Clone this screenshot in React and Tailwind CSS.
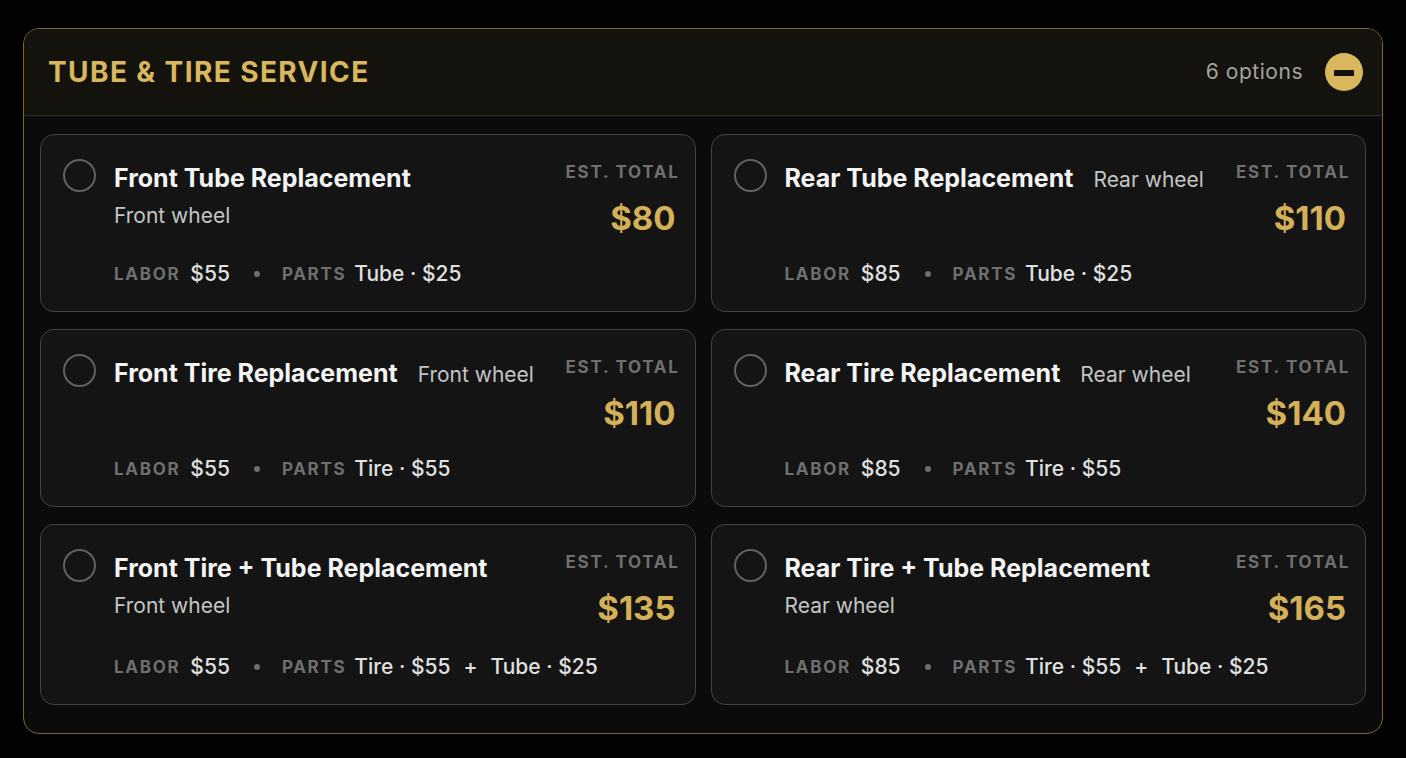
import React, { useState } from 'react';
import clsx from 'clsx';

const services = [
  { id: 'front-tube', name: 'Front Tube Replacement', wheel: 'Front wheel', labor: 55, parts: [{ name: 'Tube', price: 25 }] },
  { id: 'rear-tube', name: 'Rear Tube Replacement', wheel: 'Rear wheel', labor: 85, parts: [{ name: 'Tube', price: 25 }] },
  { id: 'front-tire', name: 'Front Tire Replacement', wheel: 'Front wheel', labor: 55, parts: [{ name: 'Tire', price: 55 }] },
  { id: 'rear-tire', name: 'Rear Tire Replacement', wheel: 'Rear wheel', labor: 85, parts: [{ name: 'Tire', price: 55 }] },
  {
    id: 'front-both',
    name: 'Front Tire + Tube Replacement',
    wheel: 'Front wheel',
    labor: 55,
    parts: [{ name: 'Tire', price: 55 }, { name: 'Tube', price: 25 }]
  },
  {
    id: 'rear-both',
    name: 'Rear Tire + Tube Replacement',
    wheel: 'Rear wheel',
    labor: 85,
    parts: [{ name: 'Tire', price: 55 }, { name: 'Tube', price: 25 }]
  }
];

const getTotal = (service) =>
  service.parts.reduce((sum, part) => sum + part.price, service.labor);

const ServiceCard = ({ service, checked, onSelect }) => {
  const { id, name, wheel, labor, parts } = service;

  return (
    <label
      htmlFor={id}
      className={clsx(
        'flex cursor-pointer flex-col justify-between rounded-[14px] border bg-[#131413] pt-6 pr-[19px] pb-[23px] pl-[22px]',
        parts.length > 1 ? 'min-h-[181px]' : 'min-h-[178px]',
        checked ? 'border-[#d4b158]' : 'border-[#434343]'
      )}
    >
      <div className="flex items-start">
        <input
          type="radio"
          id={id}
          name="service"
          checked={checked}
          onChange={() => onSelect(id)}
          className="mr-[18px] size-[33px] shrink-0 cursor-pointer appearance-none rounded-full border-2 border-[#616161] checked:border-[10px] checked:border-[#d4b158]"
        />
        <div className="flex flex-1 flex-wrap items-baseline gap-x-5 gap-y-1 pt-0.5">
          <span className="text-[25px] leading-[34px] font-bold whitespace-nowrap text-[#f4f4f4]">{name}</span>
          <span className="text-[21px] leading-[34px] whitespace-nowrap text-[#c4c4c4]">{wheel}</span>
        </div>
        <div className="ml-6 shrink-0 text-right">
          <div className="-mr-1 text-[17px] leading-[26px] font-bold tracking-widest text-[#6f6f6f]">EST. TOTAL</div>
          <div className="mt-3 text-[33px] leading-[42px] font-bold text-[#d4b158]">${getTotal(service)}</div>
        </div>
      </div>

      <div className="flex items-center pl-[51px] text-[21px] leading-[28px] font-medium text-[#e0e0e0]">
        <span className="mr-2.5 text-[17px] font-bold tracking-widest text-[#6f6f6f]">LABOR</span>
        <span>${labor}</span>
        <span className="mr-[22px] ml-6 size-1.5 rounded-full bg-[#6f6f6f]" />
        <span className="mr-2 text-[17px] font-bold tracking-widest text-[#6f6f6f]">PARTS</span>
        {parts.map((part, index) => (
          <React.Fragment key={part.name}>
            {index > 0 && <span className="mx-[13px]">+</span>}
            <span>{part.name} · ${part.price}</span>
          </React.Fragment>
        ))}
      </div>
    </label>
  );
};

const App = () => {
  const [open, setOpen] = useState(true);
  const [selected, setSelected] = useState(null);

  return (
    <div className="min-h-screen bg-[#020202] px-[23px] pt-7 pb-6 font-['Inter',sans-serif]">
      <section className="overflow-hidden rounded-2xl border border-[#7f6730] bg-[#0a0b0a]">
        <header className="flex h-[87px] items-center justify-between border-b border-[#322d1e] bg-[#13120d] pr-[19px] pl-6">
          <h2 className="text-[28px] leading-9 font-bold tracking-wider text-[#d9b75e]">TUBE &amp; TIRE SERVICE</h2>
          <div className="flex items-center gap-[22px]">
            <span className="text-[21px] leading-7 tracking-wide text-[#a3a3a3]">{services.length} options</span>
            <button
              type="button"
              aria-label="Toggle tube and tire service"
              aria-expanded={open}
              onClick={() => setOpen(!open)}
              className="flex size-[38px] cursor-pointer items-center justify-center rounded-full bg-[#d9b75e]"
            >
              <svg viewBox="0 0 20 20" className="mt-0.5 size-5 fill-[#13120d]">
                <rect x="0" y="7" width="20" height="6" />
                {!open && <rect x="7" y="0" width="6" height="20" />}
              </svg>
            </button>
          </div>
        </header>

        {open && (
          <div className="grid grid-cols-2 gap-x-[15px] gap-y-[17px] px-4 pt-[18px] pb-7">
            {services.map((service) => (
              <ServiceCard
                key={service.id}
                service={service}
                checked={selected === service.id}
                onSelect={setSelected}
              />
            ))}
          </div>
        )}
      </section>
    </div>
  );
};

export default App;
